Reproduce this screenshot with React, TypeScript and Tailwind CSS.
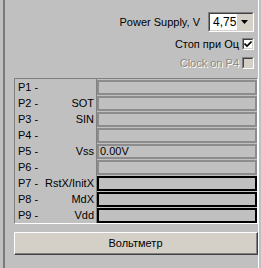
import React from "react"

const pins = [
  { pin: "P1 -", name: "", value: "", dark: false },
  { pin: "P2 -", name: "SOT", value: "", dark: false },
  { pin: "P3 -", name: "SIN", value: "", dark: false },
  { pin: "P4 -", name: "", value: "", dark: false },
  { pin: "P5 -", name: "Vss", value: "0.00V", dark: false },
  { pin: "P6 -", name: "", value: "", dark: false },
  { pin: "P7 -", name: "RstX/InitX", value: "", dark: true },
  { pin: "P8 -", name: "MdX", value: "", dark: true },
  { pin: "P9 -", name: "Vdd", value: "", dark: true },
]

function CheckBox({ checked, disabled }: { checked?: boolean; disabled?: boolean }) {
  return (
    <div className="w-[12px] h-[12px] border-t border-l border-t-[#808080] border-l-[#808080] border-b border-r border-b-white border-r-white">
      <div
        className={
          "w-full h-full border-t border-l border-t-[#404040] border-l-[#404040] border-b border-r border-b-[#d4d0c8] border-r-[#d4d0c8] flex items-center justify-center " +
          (disabled ? "bg-[#d4d0c8]" : "bg-white")
        }
      >
        {checked && (
          <svg width="8" height="8" viewBox="0 0 8 8">
            <path d="M0.5 3.5 L3 6 L7.5 1.5" stroke="black" strokeWidth="1.6" fill="none" />
          </svg>
        )}
      </div>
    </div>
  )
}

export default function App() {
  return (
    <div className="w-[261px] h-[268px] bg-[#c0c0c0] pl-[3px] pr-[2px] font-['Liberation_Sans',Arial,sans-serif] text-[11px] text-black leading-none">
      <div className="h-full border-l-2 border-l-[#7a7a7a] border-r border-r-white flex flex-col">
        {/* top settings */}
        <div className="flex flex-col items-end pr-[4px] pt-[12px]">
          <div className="flex items-center">
            <span className="mr-[8px]">Power Supply, V</span>
            <div className="w-[46px] h-[20px] border-t border-l border-t-[#808080] border-l-[#808080] border-b border-r border-b-white border-r-white">
              <div className="h-full bg-white border-t border-l border-t-[#404040] border-l-[#404040] border-b border-r border-b-[#d4d0c8] border-r-[#d4d0c8] flex items-center">
                <span className="pl-[3px] flex-1 text-[12px]">4,75</span>
                <div className="w-[15px] h-full bg-[#d4d0c8] flex items-center justify-center">
                  <svg width="7" height="4" viewBox="0 0 7 4">
                    <path d="M0 0 H7 L3.5 4 Z" fill="black" />
                  </svg>
                </div>
              </div>
            </div>
          </div>
          <div className="flex items-center mt-[6px]">
            <span className="mr-[3px]">Стоп при Оц</span>
            <CheckBox checked />
          </div>
          <div className="flex items-center mt-[7px]">
            <span className="mr-[3px] text-[#8a8a8a] [text-shadow:1px_1px_0_#ffffff]">Clock on P4</span>
            <CheckBox disabled />
          </div>
        </div>

        {/* pins */}
        <div className="ml-[9px] mt-[9px] border-t border-l border-t-[#808080] border-l-[#808080] border-b border-r border-b-white border-r-white flex">
          <div className="w-[82px] border-r border-r-[#808080] flex flex-col">
            {pins.map((p) => (
              <div key={p.pin} className="h-[16px] flex items-center justify-between pl-[3px] pr-[2px]">
                <span>{p.pin}</span>
                <span>{p.name}</span>
              </div>
            ))}
          </div>
          <div className="flex-1 flex flex-col gap-[1px] pt-[1px]">
            {pins.map((p) => (
              <div
                key={p.pin}
                className={
                  "h-[15px] border-2 flex items-center pl-[1px] " +
                  (p.dark ? "border-black" : "border-[#8c8c8c]")
                }
              >
                {p.value}
              </div>
            ))}
          </div>
        </div>

        {/* button */}
        <div className="ml-[9px] mt-[8px] h-[23px] bg-[#d4d0c8] border-t border-l border-t-white border-l-white border-b border-r border-b-[#404040] border-r-[#404040]">
          <div className="h-full border-b border-r border-b-[#808080] border-r-[#808080] flex items-center justify-center">
            Вольтметр
          </div>
        </div>
      </div>
    </div>
  )
}
